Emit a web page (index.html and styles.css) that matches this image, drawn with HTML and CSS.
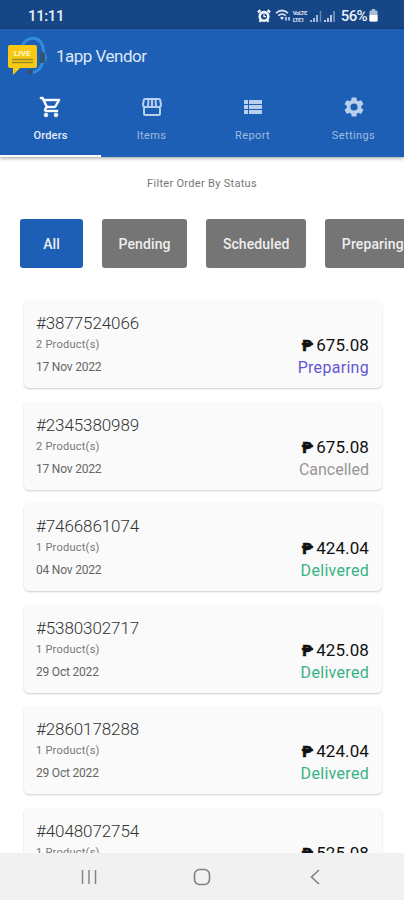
FILE: index.html
```html
<!DOCTYPE html>
<html lang="en">
<head>
    <meta charset="UTF-8">
    <meta name="viewport" content="width=device-width, initial-scale=1.0">
    <title>1app Vendor</title>
    <link rel="stylesheet" href="styles.css">
</head>
<body>
    <div class="phone">
        <div class="status-bar">
            <span class="time">11:11</span>
            <div class="status-icons">
                <svg class="alarm" width="14" height="14" viewBox="0 0 14 14">
                    <circle cx="7" cy="7.4" r="4.3" fill="none" stroke="#f2f6fb" stroke-width="2.6"/>
                    <path d="M1 3.4 3.4 1.2M13 3.4 10.6 1.2M2.5 12.8l1.4-1.6M11.5 12.8l-1.4-1.6" stroke="#f2f6fb" stroke-width="2.4"/>
                    <path d="M7 5v2.7h2" fill="none" stroke="#f2f6fb" stroke-width="1.2"/>
                </svg>
                <svg class="wifi" width="16" height="13" viewBox="0 0 16 13">
                    <path d="M1 4.2Q7 -1.2 13 4.2M3.2 6.7Q7 3.4 10.8 6.7" fill="none" stroke="#d5e1f0" stroke-width="1.7"/>
                    <path d="M5 8.6Q7 7 9 8.6L7 11z" fill="#d5e1f0"/>
                    <path d="M11 11.5V8M14 8v3.5" stroke="#d5e1f0" stroke-width="1.5"/>
                </svg>
                <span class="volte">VoLTE<br>LTE1</span>
                <svg class="signal" width="12" height="12" viewBox="0 0 12 12">
                    <path d="M1 12v-2M4 12V8M7 12V5" stroke="#b9cbe2" stroke-width="1.7"/>
                    <path d="M10.5 12V1" stroke="#6687b1" stroke-width="1.5"/>
                </svg>
                <svg class="signal" width="12" height="12" viewBox="0 0 12 12">
                    <path d="M1 12v-2M4 12V8M7 12V5" stroke="#c9d8ea" stroke-width="1.8"/>
                    <path d="M10 12V1" stroke="#7f9bc0" stroke-width="1.6"/>
                </svg>
                <span class="percent">56%</span>
                <svg class="battery" width="9" height="13" viewBox="0 0 9 13">
                    <path d="M3 0h3v2h-3z" fill="#a9bed9"/>
                    <rect x="0.5" y="1.5" width="8" height="11" rx="1.2" fill="#a9bed9"/>
                    <path d="M.5 6h8v5.3q0 1.2-1.2 1.2H1.7q-1.2 0-1.2-1.2z" fill="#fff"/>
                </svg>
            </div>
        </div>

        <header class="header">
            <div class="brand">
                <svg class="logo" width="41" height="40" viewBox="0 0 41 40">
                    <path d="M14 11C16 4 22 1.500 27 2.500C34 4 36 11 35.500 20C35 30 31 36 23 36.500" fill="none" stroke="#328bdb" stroke-width="3"/>
                    <path d="M37 16q4 5.500 0 11z" fill="#3289d7"/>
                    <rect x="32" y="16" width="5" height="11" rx="2" fill="#34536e"/>
                    <rect x="19" y="34" width="6" height="4" rx="2" fill="#34536e"/>
                    <path d="M2 9h25a2 2 0 0 1 2 2v19a2 2 0 0 1-2 2H12l-7 7v-7H2a2 2 0 0 1-2-2V11a2 2 0 0 1 2-2z" fill="#f7c914"/>
                    <text class="logo-text" x="6" y="19.500">LIVE</text>
                    <path d="M4 23.500h21M4 26.500h21" stroke="#9b8b25" stroke-width="1.3"/>
                </svg>
                <h1>1app Vendor</h1>
            </div>
            <nav class="tabs">
                <div class="tab active">
                    <svg width="24" height="24" viewBox="0 0 24 24" fill="currentColor" stroke="currentColor" stroke-width="0.4"><path d="M15.55 13c.75 0 1.41-.41 1.75-1.03l3.58-6.49A1 1 0 0 0 20.01 4H5.21l-.94-2H1v2h2l3.6 7.59-1.35 2.44C4.52 15.37 5.48 17 7 17h12v-2H7l1.1-2h7.45zM6.16 6h12.15l-2.76 5H8.53L6.16 6zM7 18a2 2 0 1 0 0 4 2 2 0 0 0 0-4zm10 0a2 2 0 1 0 0 4 2 2 0 0 0 0-4z"/></svg>
                    <span>Orders</span>
                </div>
                <div class="tab">
                    <svg width="24" height="24" viewBox="0 0 24 24" fill="none" stroke="currentColor" stroke-width="2"><path d="M4 11v7.500q0 1.500 1.500 1.500h13q1.500 0 1.500-1.500V11M5 4h14q1 0 1.200 1L21 9.500Q21 12 18.500 12H5.500Q3 12 3 9.500L3.800 5Q4 4 5 4zM8.500 4 8 12M12 4v8M15.500 4l.5 8"/></svg>
                    <span>Items</span>
                </div>
                <div class="tab">
                    <svg width="24" height="24" viewBox="0 0 24 24" fill="currentColor"><path d="M3 5h4v4H3zM8 5h13v4H8zM3 10h4v4H3zM8 10h13v4H8zM3 15h4v4H3zM8 15h13v4H8z"/></svg>
                    <span>Report</span>
                </div>
                <div class="tab">
                    <svg width="24" height="24" viewBox="0 0 24 24" fill="currentColor"><path d="M19.14 12.94c.04-.3.06-.61.06-.94s-.02-.64-.07-.94l2.03-1.58a.49.49 0 0 0 .12-.61l-1.92-3.32a.49.49 0 0 0-.59-.22l-2.39.96c-.5-.38-1.03-.7-1.62-.94l-.36-2.54a.48.48 0 0 0-.48-.41h-3.84a.48.48 0 0 0-.47.41l-.36 2.54c-.59.24-1.13.57-1.62.94l-2.39-.96a.49.49 0 0 0-.59.22L2.74 8.87a.48.48 0 0 0 .12.61l2.03 1.58c-.05.3-.09.63-.09.94s.02.64.07.94l-2.03 1.58a.49.49 0 0 0-.12.61l1.92 3.32c.12.22.37.29.59.22l2.39-.96c.5.38 1.03.7 1.62.94l.36 2.54c.05.24.24.41.48.41h3.84c.24 0 .44-.17.47-.41l.36-2.54c.59-.24 1.13-.56 1.62-.94l2.39.96c.22.08.47 0 .59-.22l1.92-3.32a.49.49 0 0 0-.12-.61l-2.01-1.58zM12 15.6a3.6 3.6 0 1 1 0-7.2 3.6 3.6 0 0 1 0 7.2z"/></svg>
                    <span>Settings</span>
                </div>
            </nav>
        </header>

        <main class="content">
            <p class="filter-title">Filter Order By Status</p>
            <div class="filters">
                <button class="filter-btn all selected">All</button>
                <button class="filter-btn pending">Pending</button>
                <button class="filter-btn scheduled">Scheduled</button>
                <button class="filter-btn preparing-btn">Preparing</button>
            </div>

            <div class="orders">
                <div class="order-card">
                    <div class="order-info">
                        <h2>#3877524066</h2>
                        <p class="products">2 Product(s)</p>
                        <p class="date">17 Nov 2022</p>
                    </div>
                    <div class="order-total">
                        <p class="price"><span class="peso">₱</span>675.08</p>
                        <p class="status preparing">Preparing</p>
                    </div>
                </div>
                <div class="order-card">
                    <div class="order-info">
                        <h2>#2345380989</h2>
                        <p class="products">2 Product(s)</p>
                        <p class="date">17 Nov 2022</p>
                    </div>
                    <div class="order-total">
                        <p class="price"><span class="peso">₱</span>675.08</p>
                        <p class="status cancelled">Cancelled</p>
                    </div>
                </div>
                <div class="order-card">
                    <div class="order-info">
                        <h2>#7466861074</h2>
                        <p class="products">1 Product(s)</p>
                        <p class="date">04 Nov 2022</p>
                    </div>
                    <div class="order-total">
                        <p class="price"><span class="peso">₱</span>424.04</p>
                        <p class="status delivered">Delivered</p>
                    </div>
                </div>
                <div class="order-card">
                    <div class="order-info">
                        <h2>#5380302717</h2>
                        <p class="products">1 Product(s)</p>
                        <p class="date">29 Oct 2022</p>
                    </div>
                    <div class="order-total">
                        <p class="price"><span class="peso">₱</span>425.08</p>
                        <p class="status delivered">Delivered</p>
                    </div>
                </div>
                <div class="order-card">
                    <div class="order-info">
                        <h2>#2860178288</h2>
                        <p class="products">1 Product(s)</p>
                        <p class="date">29 Oct 2022</p>
                    </div>
                    <div class="order-total">
                        <p class="price"><span class="peso">₱</span>424.04</p>
                        <p class="status delivered">Delivered</p>
                    </div>
                </div>
                <div class="order-card">
                    <div class="order-info">
                        <h2>#4048072754</h2>
                        <p class="products">1 Product(s)</p>
                    </div>
                    <div class="order-total">
                        <p class="price"><span class="peso">₱</span>525.08</p>
                    </div>
                </div>
            </div>
        </main>

        <footer class="nav-bar">
            <svg width="18" height="18" viewBox="0 0 18 18"><path d="M2.500 2v14M9 2v14M15.500 2v14" stroke="#868686" stroke-width="1.5"/></svg>
            <svg width="18" height="18" viewBox="0 0 18 18"><rect x="1.500" y="1.500" width="15" height="15" rx="5" fill="none" stroke="#808080" stroke-width="1.6"/></svg>
            <svg width="18" height="18" viewBox="0 0 18 18"><path d="M13 2 5.500 9l7.500 7" fill="none" stroke="#808080" stroke-width="1.6"/></svg>
        </footer>
    </div>
</body>
</html>
```
FILE: styles.css
```css
* {
    box-sizing: border-box;
}

body {
    margin: 0;
    background: #fff;
    font-family: Roboto, 'Liberation Sans', sans-serif;
}

h1, h2, p {
    margin: 0;
    white-space: nowrap;
}

.phone {
    display: flex;
    flex-direction: column;
    width: 404px;
    height: 900px;
    overflow: hidden;
}

/* Status bar */
.status-bar {
    display: flex;
    flex: none;
    justify-content: space-between;
    align-items: center;
    height: 29px;
    padding: 2px 26px 0 28px;
    background: #164685;
    color: #e8eff8;
}

.time {
    font-size: 15px;
    font-weight: 500;
    letter-spacing: -0.4px;
}

.status-icons {
    display: flex;
    align-items: center;
}

.wifi {
    margin-left: 4px;
}

.volte {
    width: 15px;
    margin-left: 2px;
    font-size: 6px;
    line-height: 7px;
    font-weight: 900;
    letter-spacing: -0.6px;
    color: #c5d4e7;
}

.signal {
    margin-left: 2px;
}

.percent {
    margin-left: 5px;
    font-size: 15px;
    font-weight: 500;
    letter-spacing: -0.6px;
}

.battery {
    margin-left: 2px;
}

/* Header */
.header {
    position: relative;
    flex: none;
    height: 128px;
    background: #1d5fb4;
    box-shadow: 0 1px 4px rgba(0, 0, 0, 0.4);
}

.brand {
    display: flex;
    align-items: center;
    gap: 7px;
    height: 55px;
    padding: 0 0 1px 8px;
}

.brand h1 {
    font-size: 17px;
    font-weight: 400;
    letter-spacing: -0.5px;
    color: #dce8f6;
}

.logo-text {
    font: 900 8px Roboto, sans-serif;
    fill: #fff3b5;
}

.tabs {
    display: flex;
    height: 73px;
}

.tab {
    display: flex;
    flex: 1;
    flex-direction: column;
    align-items: center;
    padding-top: 11px;
    border-bottom: 2px solid transparent;
    color: #b8d0ee;
}

.tab span {
    margin-top: 10px;
    font-size: 11px;
    line-height: 14px;
    letter-spacing: 0.4px;
    color: #9fbce2;
}

.tab.active {
    border-bottom-color: #fff;
    color: #fff;
}

.tab.active span {
    font-weight: 500;
    letter-spacing: 0.2px;
    color: #e4eefa;
}

/* Filters */
.content {
    flex: 1;
    min-height: 0;
    overflow: hidden;
}

.filter-title {
    padding-top: 20px;
    font-size: 11px;
    line-height: 14px;
    letter-spacing: 0.3px;
    text-align: center;
    color: #777;
}

.filters {
    display: flex;
    gap: 19.1px;
    padding: 28px 0 0 20px;
}

.filter-btn {
    flex: none;
    height: 49px;
    padding: 0;
    border: none;
    border-radius: 3px;
    background: #757575;
    color: #eee;
    font-family: inherit;
    font-size: 14px;
    font-weight: 500;
    letter-spacing: 0.1px;
}

.filter-btn.selected {
    background: #1d5fb4;
}

.all {
    width: 63px;
}

.pending {
    width: 85px;
}

.scheduled {
    width: 100px;
}

.preparing-btn {
    width: 95px;
}

/* Orders */
.orders {
    display: flex;
    flex-direction: column;
    gap: 13.5px;
    padding: 32px 22px 0 24px;
}

.order-card {
    display: flex;
    flex: none;
    justify-content: space-between;
    height: 88px;
    padding: 0 13px 0 12px;
    border-radius: 5px;
    background: #fafafa;
    box-shadow: 0 1px 2px rgba(0, 0, 0, 0.2);
}

.order-info {
    padding-top: 12px;
}

.order-info h2 {
    font-size: 17px;
    line-height: 22px;
    font-weight: 300;
    letter-spacing: -0.1px;
    color: #333;
}

.products {
    font-size: 11px;
    line-height: 22px;
    letter-spacing: 0.25px;
    color: #777;
}

.date {
    font-size: 12px;
    line-height: 22px;
    letter-spacing: -0.2px;
    color: #666;
}

.order-total {
    padding-top: 34px;
    text-align: right;
}

.price {
    font-size: 17px;
    line-height: 22px;
    letter-spacing: 0.1px;
    color: #111;
}

.peso {
    margin-right: 3px;
    font-size: 15px;
    font-weight: 900;
    -webkit-text-stroke: 0.5px #111;
}

.status {
    font-size: 16px;
    line-height: 21px;
    letter-spacing: 0.3px;
}

.preparing {
    color: #6457d5;
}

.cancelled {
    letter-spacing: 0;
    color: #969696;
}

.delivered {
    color: #37b383;
}

/* Bottom navigation */
.nav-bar {
    display: flex;
    flex: none;
    justify-content: space-between;
    align-items: center;
    height: 47px;
    padding: 0 80px;
    background: #f1f1f1;
}
```
